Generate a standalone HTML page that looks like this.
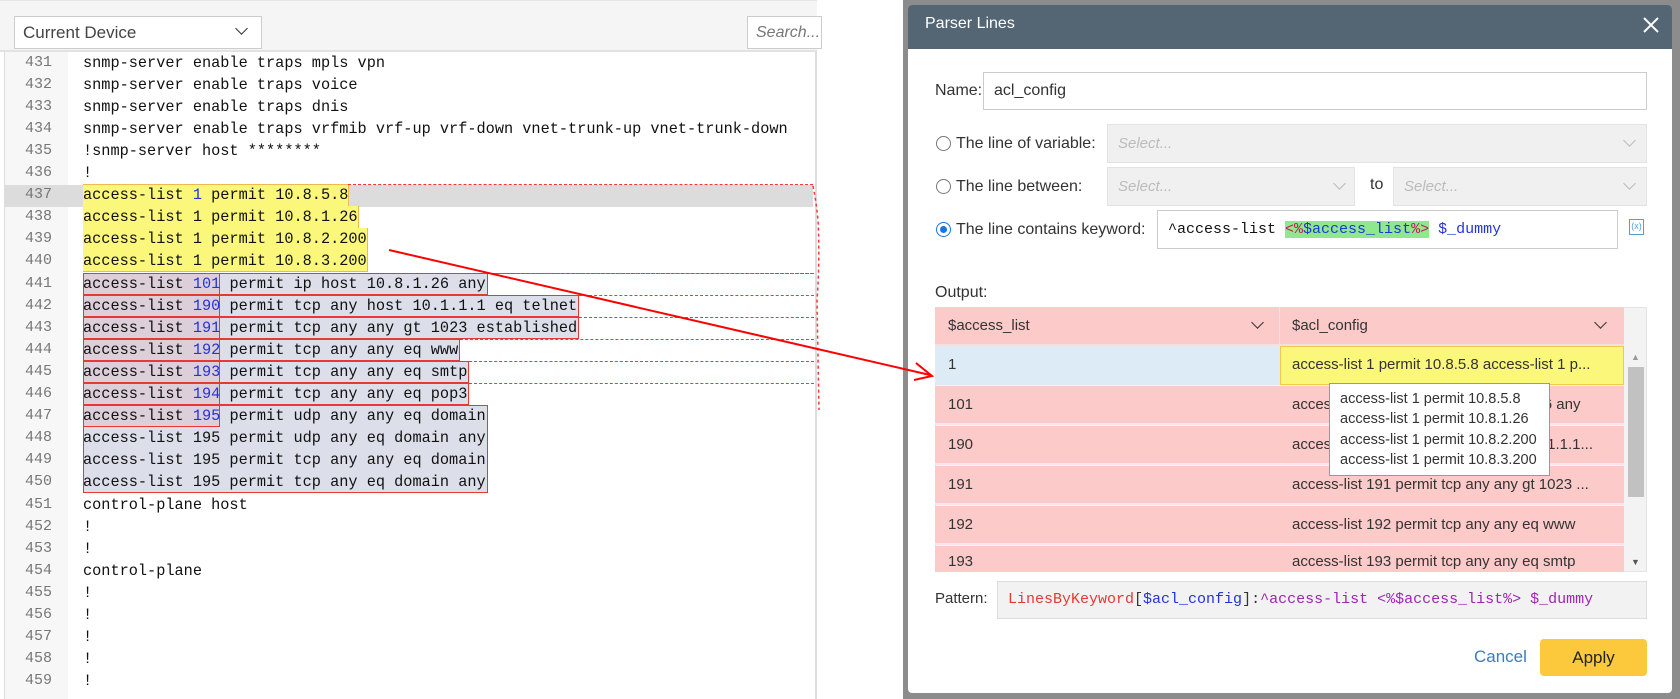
<!DOCTYPE html>
<html><head><meta charset="utf-8"><style>
*{box-sizing:border-box;margin:0;padding:0}
body{width:1680px;height:699px;position:relative;overflow:hidden;background:#fff;font-family:"Liberation Sans",sans-serif}
.abs{position:absolute}
.mono{font-family:"Liberation Mono",monospace}
.ln{position:absolute;left:4px;width:64px;height:22.1px;text-align:right;padding-right:16px;color:#777;font-size:15px;line-height:22.1px;font-family:"Liberation Mono",monospace}
.code{position:absolute;left:83px;height:22.1px;font-size:15.25px;line-height:22.1px;white-space:pre;color:#111;font-family:"Liberation Mono",monospace}
.n{color:#2233dd}
.sel{background:#f0f0f0;border:1px solid #e3e3e3;color:#bbb;font-style:italic;font-size:15px;padding-left:10px;line-height:37px}
.chev{position:absolute;width:9px;height:9px;border-right:1.5px solid #333;border-bottom:1.5px solid #333;transform:rotate(45deg)}
.radio{position:absolute;width:15px;height:15px;border:1.5px solid #777;border-radius:50%;background:#fff}
.lbl{position:absolute;font-size:16px;color:#333}
.row{position:absolute;left:935px;width:689px;height:39px;background:#fdcaca;border-bottom:2px solid #f4e8e8;font-size:15px;color:#333;line-height:38px}
.row span{position:absolute}
</style></head><body>

<div class="abs" style="left:0;top:0;width:817px;height:699px;background:#fff;border-right:2px solid #ddd"></div>
<div class="abs" style="left:4px;top:52px;width:64px;height:647px;background:#f7f7f7;border-left:1px solid #ddd"></div>
<div class="abs" style="left:4px;top:185px;width:809px;height:22px;background:#dcdcdc"></div>

<div id="code"></div>

<div class="abs" style="left:0;top:0;width:817px;height:52px;background:#f5f5f5;border-bottom:2px solid #e2e2e2;border-top:1px solid #e6e6e6"></div>
<div class="abs" style="left:14px;top:16px;width:248px;height:33px;background:#fff;border:1px solid #ccc;font-size:17px;color:#444;padding-left:8px;line-height:31px">Current Device</div>
<div class="chev" style="left:237px;top:24px"></div>
<div class="abs" style="left:747px;top:16px;width:75px;height:33px;background:#fff;border:1px solid #ccc;font-size:16px;color:#777;font-style:italic;padding-left:8px;line-height:31px">Search...</div>

<div class="abs" style="left:903px;top:0;width:777px;height:699px;background:#8c8c8c"></div>
<div class="abs" style="left:908px;top:5px;width:764px;height:688px;background:#fff;border-radius:4px;overflow:hidden">
  <div class="abs" style="left:0;top:0;width:764px;height:44px;background:#546673"></div>
</div>
<div class="abs" style="left:925px;top:15px;font-size:16px;color:#fff">Parser Lines</div>
<svg class="abs" style="left:1643px;top:17px" width="16" height="16"><path d="M1 1L15 15M15 1L1 15" stroke="#fff" stroke-width="2"/></svg>

<div class="lbl" style="left:935px;top:82px">Name:</div>
<div class="abs" style="left:983px;top:72px;width:664px;height:38px;border:1px solid #ccc;font-size:16px;color:#333;padding-left:10px;line-height:36px">acl_config</div>

<div class="radio" style="left:936px;top:136px"></div>
<div class="lbl" style="left:956px;top:135px">The line of variable:</div>
<div class="abs sel" style="left:1107px;top:124px;width:540px;height:39px">Select...</div>
<div class="chev" style="left:1625px;top:136px;border-color:#bbb"></div>

<div class="radio" style="left:936px;top:179px"></div>
<div class="lbl" style="left:956px;top:178px">The line between:</div>
<div class="abs sel" style="left:1107px;top:167px;width:248px;height:39px">Select...</div>
<div class="chev" style="left:1335px;top:179px;border-color:#bbb"></div>
<div class="lbl" style="left:1370px;top:176px">to</div>
<div class="abs sel" style="left:1393px;top:167px;width:254px;height:39px">Select...</div>
<div class="chev" style="left:1625px;top:179px;border-color:#bbb"></div>

<div class="radio" style="left:936px;top:222px;border:1.5px solid #1a73e8"></div>
<div class="abs" style="left:940px;top:226px;width:7px;height:7px;border-radius:50%;background:#1a73e8"></div>
<div class="lbl" style="left:956px;top:221px">The line contains keyword:</div>
<div class="abs mono" style="left:1157px;top:210px;width:461px;height:39px;border:1px solid #ccc;font-size:15px;line-height:37px;padding-left:10px;white-space:pre;color:#111">^access-list <span style="background:#8ee88e;color:#2233dd"><span style="color:#c2185b">&lt;%</span>$access_list<span style="color:#c2185b">%&gt;</span></span> <span style="color:#2233dd">$_dummy</span></div>
<div class="abs" style="left:1629px;top:219px;width:15px;height:16px;border:1.5px solid #5b9bd5;font-size:9px;color:#5b9bd5;text-align:center;line-height:13px">(x)</div>

<div class="lbl" style="left:935px;top:284px">Output:</div>
<div class="abs" style="left:935px;top:307px;width:712px;height:265px;border:1px solid #e4e4e4;background:#f3f3f3"></div>
<div class="abs" style="left:935px;top:307px;width:689px;height:39px;background:#fdcaca;border-bottom:2px solid #f0e0e0"></div>
<div class="abs" style="left:1279px;top:307px;width:1px;height:39px;background:#f3e0e0"></div>
<div class="abs" style="left:948px;top:317px;font-size:15px;color:#333">$access_list</div>
<div class="abs" style="left:1292px;top:317px;font-size:15px;color:#333">$acl_config</div>
<div class="chev" style="left:1253px;top:318px"></div>
<div class="chev" style="left:1596px;top:318px"></div>

<div class="row" style="top:346px;background:transparent"><span style="left:0;top:0;width:345px;height:39px;background:#dcebf5"></span><span style="left:345px;top:0;width:344px;height:39px;background:#fbf77a;border:1px solid #f2c94c"></span><span style="left:13px">1</span><span style="left:357px">access-list 1 permit 10.8.5.8 access-list 1 p...</span></div>
<div class="row" style="top:386px"><span style="left:13px">101</span><span style="left:357px">access-list 101 permit ip host 10.8.1.26 any</span></div>
<div class="row" style="top:426px"><span style="left:13px">190</span><span style="left:357px">access-list 190 permit tcp any host 10.1.1.1...</span></div>
<div class="row" style="top:466px"><span style="left:13px">191</span><span style="left:357px">access-list 191 permit tcp any any gt 1023 ...</span></div>
<div class="row" style="top:506px"><span style="left:13px">192</span><span style="left:357px">access-list 192 permit tcp any any eq www</span></div>
<div class="row" style="top:546px;height:26px;overflow:hidden;border:none"><span style="left:13px;top:-3px">193</span><span style="left:357px;top:-3px">access-list 193 permit tcp any any eq smtp</span></div>
<div class="abs" style="left:1628px;top:367px;width:16px;height:130px;background:#c1c1c1"></div>
<div class="abs" style="left:1631px;top:352px;font-size:9px;color:#999">▲</div>
<div class="abs" style="left:1631px;top:557px;font-size:9px;color:#555">▼</div>

<div class="abs" style="left:1329px;top:383px;width:221px;height:93px;background:#fff;border:1px solid #999;font-size:14.5px;color:#333;line-height:20.3px;padding:5px 0 0 10px">access-list 1 permit 10.8.5.8<br>access-list 1 permit 10.8.1.26<br>access-list 1 permit 10.8.2.200<br>access-list 1 permit 10.8.3.200</div>

<div class="lbl" style="left:935px;top:590px;font-size:15px">Pattern:</div>
<div class="abs mono" style="left:997px;top:581px;width:650px;height:38px;background:#f3f2f3;border:1px solid #ddd;font-size:15px;line-height:36px;padding-left:10px;white-space:pre;color:#9c27b0"><span style="color:#e53935">LinesByKeyword</span><span style="color:#333">[</span><span style="color:#2233dd">$acl_config</span><span style="color:#333">]:</span>^access-list &lt;%$access_list%&gt; $_dummy</div>

<div class="abs" style="left:1474px;top:647px;font-size:17px;color:#3a7cc0">Cancel</div>
<div class="abs" style="left:1540px;top:639px;width:107px;height:37px;background:#fdc93c;border-radius:4px;font-size:17px;color:#222;text-align:center;line-height:37px">Apply</div>

<svg class="abs" style="left:0;top:0" width="1680" height="699"><line x1="389" y1="250" x2="930" y2="375" stroke="#f00" stroke-width="2"/><path d="M916 363 L932 376 L914 380" fill="none" stroke="#f00" stroke-width="2"/></svg>

<script>
(function(){
var lines=["snmp-server enable traps mpls vpn","snmp-server enable traps voice","snmp-server enable traps dnis","snmp-server enable traps vrfmib vrf-up vrf-down vnet-trunk-up vnet-trunk-down","!snmp-server host ********","!",
"access-list 1 permit 10.8.5.8","access-list 1 permit 10.8.1.26","access-list 1 permit 10.8.2.200","access-list 1 permit 10.8.3.200",
"access-list 101 permit ip host 10.8.1.26 any","access-list 190 permit tcp any host 10.1.1.1 eq telnet","access-list 191 permit tcp any any gt 1023 established","access-list 192 permit tcp any any eq www","access-list 193 permit tcp any any eq smtp","access-list 194 permit tcp any any eq pop3","access-list 195 permit udp any any eq domain","access-list 195 permit udp any eq domain any","access-list 195 permit tcp any any eq domain","access-list 195 permit tcp any eq domain any",
"control-plane host","!","!","control-plane","!","!","!","!","!"];
var h="",cw=9.15,x0=83,p=22.1,t0=51.5;
function esc(s){return s.replace(/&/g,"&amp;").replace(/</g,"&lt;")}
for(var i=0;i<lines.length;i++){
 var n=431+i,ty=t0+i*p,s=lines[i],len=s.length*cw;
 if(n>=437&&n<=440){h+='<div class="abs" style="left:'+x0+'px;top:'+ty+'px;width:'+(len+1)+'px;height:'+p+'px;background:#fbf77a;border-right:1px solid #f0b94c'+(n==437?';border-top:1px solid #f0b94c':'')+(n==440?';border-bottom:1px solid #f0b94c':'')+'"></div>';}
 if(n>=441&&n<=450){h+='<div class="abs" style="left:'+x0+'px;top:'+ty+'px;width:'+(len+1)+'px;height:'+p+'px;background:#dcdfea"></div>';}
 if(n>=441&&n<=447){h+='<div class="abs" style="left:'+x0+'px;top:'+ty+'px;width:'+(15*cw)+'px;height:'+p+'px;background:#dccfd9;border:1.5px solid #e53935"></div>';}
 if(n>=441&&n<=446){h+='<div class="abs" style="left:'+x0+'px;top:'+ty+'px;width:'+(len+2)+'px;height:'+p+'px;border:1.5px solid #e53935"></div>';
   h+='<div class="abs" style="left:'+(x0+len+2)+'px;top:'+ty+'px;width:'+(812-x0-len)+'px;border-top:1px dashed #f33"></div>';}
 if(n==437||n==441)h+='<div class="abs" style="left:'+(x0+len)+'px;top:'+ty+'px;width:'+(813-x0-len)+'px;border-top:1px dashed #f33"></div>';
 var code=esc(s);
 if(n==437)code='access-list <span class="n">1</span>'+code.slice(13);
 if(n>=441&&n<=447)code='access-list <span class="n">'+s.substr(12,3)+'</span>'+code.slice(15);
 h+='<div class="ln" style="top:'+ty+'px">'+n+'</div><div class="code" style="top:'+ty+'px">'+code+'</div>';
}
var bt=t0+16*p;h+='<div class="abs" style="left:'+x0+'px;top:'+bt+'px;width:'+(44*cw+2)+'px;height:'+(4*p)+'px;border:1.5px solid #e53935"></div>';
h+='<svg class="abs" style="left:800px;top:180px" width="30" height="270"><path d="M13 6 Q16 20 18 40 Q20 80 17 120 Q18 180 19 230" fill="none" stroke="#f33" stroke-dasharray="3 3" stroke-width="1.5"/></svg>';
document.getElementById("code").innerHTML=h;
})();
</script>
</body></html>
